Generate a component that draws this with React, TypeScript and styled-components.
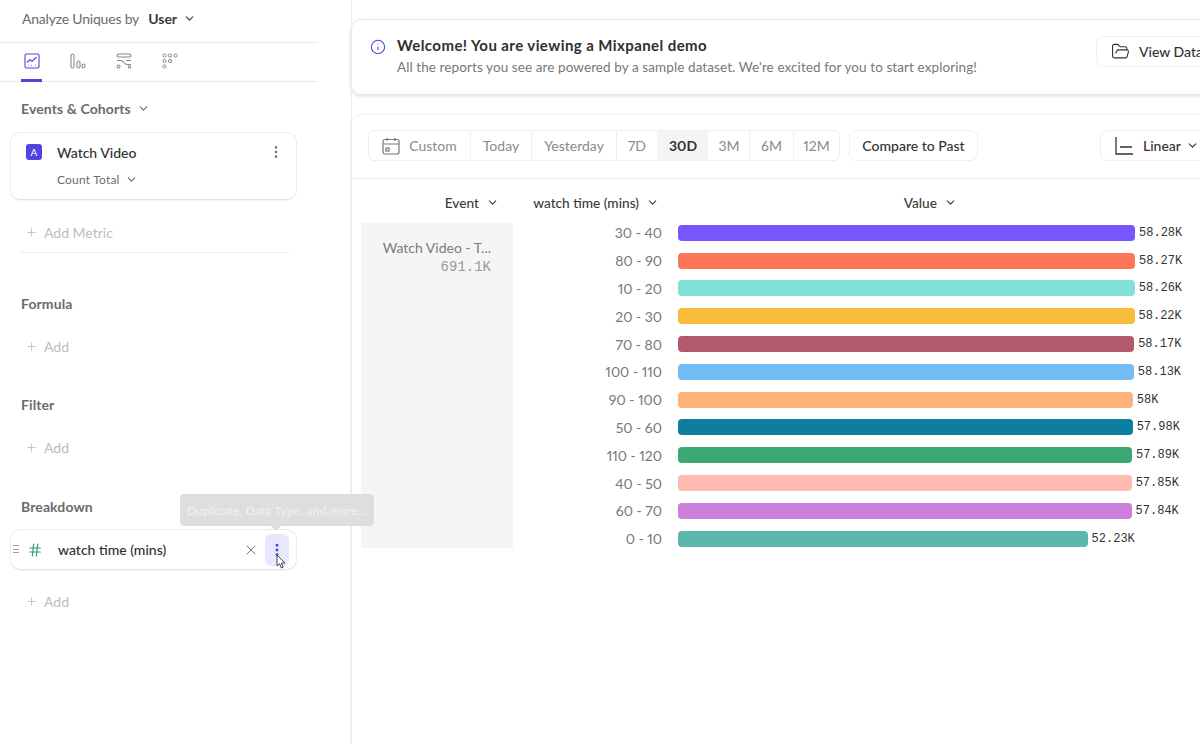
import styled, { createGlobalStyle } from 'styled-components';
import { ChevronDown, EllipsisVertical, FolderOpen, Hash, Info, Plus, X } from 'lucide-react';

const rows = [
  { label: '30 - 40', value: 58.28, text: '58.28K', color: '#7856ff' },
  { label: '80 - 90', value: 58.27, text: '58.27K', color: '#ff7557' },
  { label: '10 - 20', value: 58.26, text: '58.26K', color: '#80e1d9' },
  { label: '20 - 30', value: 58.22, text: '58.22K', color: '#f8bc3b' },
  { label: '70 - 80', value: 58.17, text: '58.17K', color: '#b2596e' },
  { label: '100 - 110', value: 58.13, text: '58.13K', color: '#72bef4' },
  { label: '90 - 100', value: 58, text: '58K', color: '#ffb27a' },
  { label: '50 - 60', value: 57.98, text: '57.98K', color: '#0d7ea0' },
  { label: '110 - 120', value: 57.89, text: '57.89K', color: '#3ba974' },
  { label: '40 - 50', value: 57.85, text: '57.85K', color: '#febbb2' },
  { label: '60 - 70', value: 57.84, text: '57.84K', color: '#cb80dc' },
  { label: '0 - 10', value: 52.23, text: '52.23K', color: '#5cb7af' },
];

const ranges = [
  { label: 'Today', width: 61 },
  { label: 'Yesterday', width: 85 },
  { label: '7D', width: 41 },
  { label: '30D', width: 51, active: true },
  { label: '3M', width: 41, plain: true },
  { label: '6M', width: 44 },
  { label: '12M', width: 46 },
];

const GlobalStyle = createGlobalStyle`
  html, body {
    margin: 0;
    padding: 0;
    background: #fff;
    overflow: hidden;
  }
  * {
    box-sizing: border-box;
  }
`;

const Page = styled.div`
  display: flex;
  width: 1200px;
  height: 744px;
  overflow: hidden;
  font-family: Lato, 'Noto Sans', sans-serif;
  font-variant-numeric: proportional-nums;
  color: #3b3b3b;
`;

const Sidebar = styled.aside`
  position: relative;
  flex: 0 0 352px;
  height: 100%;
  border-right: 1px solid #ececec;
`;

const TopRow = styled.div`
  display: flex;
  align-items: center;
  width: 318px;
  height: 43px;
  padding: 0 0 5px 22px;
  border-bottom: 1px solid #e9e9e9;
  font-size: 14px;
  color: #6b6b6b;
  letter-spacing: -0.2px;
`;

const TopValue = styled.span`
  display: flex;
  align-items: center;
  gap: 6px;
  margin-left: 9px;
  font-weight: 700;
  color: #3b3b3b;
  letter-spacing: 0;
`;

const Tabs = styled.div`
  display: flex;
  width: 318px;
  height: 39px;
  padding-left: 21px;
  gap: 25px;
  border-bottom: 1px solid #e9e9e9;
`;

const Tab = styled.div<{ $active?: boolean }>`
  display: flex;
  justify-content: center;
  width: 21px;
  height: 39px;
  padding-top: 10px;
  border-bottom: 3px solid ${(p) => (p.$active ? '#4f44e0' : 'transparent')};
  color: ${(p) => (p.$active ? '#4f44e0' : '#8a8a8a')};
`;

const Section = styled.section<{ $top: number }>`
  margin-top: ${(p) => p.$top}px;
`;

const SectionTitle = styled.h3`
  display: flex;
  align-items: center;
  gap: 6px;
  height: 20px;
  margin: 0 0 0 21px;
  font-size: 14px;
  font-weight: 700;
  color: #6b6b6b;
  letter-spacing: 0.1px;
`;

const Card = styled.div`
  display: flex;
  flex-direction: column;
  width: 287px;
  margin: 13px 0 0 10px;
  border: 1px solid #ececec;
  border-bottom-color: #e2e2e2;
  border-radius: 10px;
  box-shadow: 0 1px 1px rgba(0, 0, 0, 0.04);
`;

const MetricCard = styled(Card)`
  height: 68px;
  margin-top: 14px;
  padding: 10px 12px 0 15px;
`;

const BreakdownCard = styled(Card)`
  position: relative;
  flex-direction: row;
  align-items: center;
  height: 41px;
  margin-top: 13px;
  padding-left: 16px;
`;

const CardRow = styled.div`
  display: flex;
  align-items: center;
  height: 18px;
`;

const LetterBadge = styled.span`
  display: flex;
  align-items: center;
  justify-content: center;
  width: 16px;
  height: 16px;
  border-radius: 3px;
  background: #4f44e0;
  color: #fff;
  font-size: 10px;
`;

const CardName = styled.span`
  flex: 1;
  margin-left: 15px;
  font-size: 14px;
  font-weight: 500;
  color: #2f2f2f;
`;

const SubSelect = styled.div`
  display: flex;
  align-items: center;
  gap: 5px;
  margin: 11px 0 0 31px;
  font-size: 12px;
  color: #6b6b6b;
  letter-spacing: 0.2px;
`;

const AddRow = styled.div<{ $top: number }>`
  display: flex;
  align-items: center;
  gap: 6px;
  height: 20px;
  margin: ${(p) => p.$top}px 0 0 25px;
  font-size: 14px;
  color: #bdbdbd;
`;

const SoftRule = styled.div`
  width: 270px;
  height: 1px;
  margin: 10px 0 0 20px;
  background: #f0f0f0;
`;

const Grip = styled.span`
  position: absolute;
  left: 2px;
  top: 15px;
  width: 6px;
  height: 8px;
  border-top: 1px solid #9b9b9b;
  border-bottom: 1px solid #9b9b9b;
  &::after {
    content: '';
    display: block;
    margin-top: 2.5px;
    height: 1px;
    background: #9b9b9b;
  }
`;

const DotsButton = styled.span`
  display: flex;
  align-items: center;
  justify-content: center;
  width: 24px;
  height: 32px;
  margin: 0 7px 0 6px;
  border-radius: 6px;
  background: #e9e7fb;
  color: #4f44e0;
`;

const Tooltip = styled.div`
  position: absolute;
  left: 180px;
  top: 494px;
  width: 194px;
  height: 32px;
  display: flex;
  align-items: center;
  justify-content: center;
  border-radius: 4px;
  background: #dedede;
  color: #f1f1f1;
  font-size: 12px;
  letter-spacing: 0.2px;
  white-space: nowrap;
  &::after {
    content: '';
    position: absolute;
    left: 91px;
    top: 32px;
    border: 5px solid transparent;
    border-top-color: #dedede;
  }
`;

const Pointer = styled.svg`
  position: absolute;
  left: 276px;
  top: 554px;
`;

const Main = styled.main`
  flex: 0 0 900px;
  margin-left: -2px;
  padding-top: 19px;
`;

const Banner = styled.div`
  display: flex;
  align-items: flex-start;
  height: 76px;
  padding: 16px 0 0 19px;
  border: 1px solid #e6e6e6;
  border-radius: 12px;
  box-shadow: 0 2px 3px rgba(0, 0, 0, 0.1);
  color: #4f44e0;
`;

const BannerText = styled.div`
  flex: 1;
  margin-left: 11px;
`;

const BannerTitle = styled.div`
  font-size: 15px;
  line-height: 19px;
  font-weight: 700;
  color: #2f2f2f;
  letter-spacing: 0.42px;
`;

const BannerBody = styled.div`
  margin-top: 4px;
  font-size: 13.5px;
  line-height: 17px;
  color: #777;
  letter-spacing: 0.09px;
`;

const OutlineButton = styled.div`
  display: flex;
  align-items: center;
  gap: 9px;
  height: 31px;
  border: 1px solid #efefef;
  border-radius: 8px;
  font-size: 14px;
  font-weight: 500;
  color: #333;
  white-space: nowrap;
`;

const ViewData = styled(OutlineButton)`
  width: 150px;
  margin-right: 3px;
  padding-left: 14px;
`;

const ReportCard = styled.div`
  height: 640px;
  margin-top: 19px;
  border-top: 1px solid #f0f0f0;
  border-left: 1px solid #f0f0f0;
  border-top-left-radius: 12px;
`;

const Toolbar = styled.div`
  display: flex;
  align-items: center;
  height: 64px;
  padding: 0 0 2px 17px;
  border-bottom: 1px solid #ececec;
`;

const Segments = styled.div`
  display: flex;
  height: 31px;
  border: 1px solid #efefef;
  border-radius: 6px;
`;

const Segment = styled.div<{ $active?: boolean; $plain?: boolean }>`
  display: flex;
  align-items: center;
  justify-content: center;
  gap: 9px;
  border-left: 1px solid ${(p) => (p.$active || p.$plain ? 'transparent' : '#efefef')};
  background: ${(p) => (p.$active ? '#f4f4f4' : 'transparent')};
  font-size: 14px;
  font-weight: ${(p) => (p.$active ? 700 : 400)};
  color: ${(p) => (p.$active ? '#333' : '#8a8a8a')};
  &:first-child {
    border-left: 0;
  }
`;

const Compare = styled(OutlineButton)`
  justify-content: center;
  width: 129px;
  margin-left: 9px;
`;

const LinearButton = styled(OutlineButton)`
  gap: 10px;
  width: 110px;
  margin-left: 122px;
  padding-left: 14px;
`;

const Columns = styled.div`
  display: flex;
  height: 40px;
  padding-top: 13px;
  font-size: 13.7px;
  font-weight: 500;
  color: #3b3b3b;
`;

const ColumnHead = styled.div<{ $width: number }>`
  display: flex;
  align-items: center;
  justify-content: flex-end;
  gap: 7px;
  width: ${(p) => p.$width}px;
  height: 20px;
`;

const ChartBody = styled.div`
  display: flex;
  align-items: flex-start;
  padding-left: 10px;
`;

const EventCell = styled.div`
  flex: 0 0 152px;
  height: 325px;
  margin-top: 4px;
  padding: 15px 22px 0 0;
  background: #f5f5f5;
  text-align: right;
  font-size: 14px;
  line-height: 19px;
  color: #7b7b7b;
`;

const Mono = styled.span`
  font-family: 'Liberation Mono', monospace;
  font-size: 12px;
  color: #333;
`;

const EventTotal = styled(Mono)`
  display: block;
  margin-top: 1px;
  color: #9a9a9a;
  font-size: 14px;
`;

const BarList = styled.div`
  flex: 1;
`;

const BarRow = styled.div`
  display: flex;
  align-items: center;
  height: 27.8px;
`;

const RangeLabel = styled.span`
  flex: 0 0 149px;
  text-align: right;
  font-size: 14px;
  color: #777;
`;

const Bar = styled.span`
  height: 16px;
  margin: 0 4px 0 16px;
  border-radius: 4px;
`;

const TabLine = () => (
  <svg width="16" height="16" viewBox="0 0 16 16" fill="none" stroke="currentColor" strokeWidth="1.1">
    <rect x="1" y="1" width="14" height="14" rx="1.5" />
    <path d="M3 9.5l3-3 2 2 4.5-4.5" />
    <path d="M4 12.5h.5M7.5 12.5H8M11 12.5h.5" strokeWidth="1.4" />
  </svg>
);

const TabBars = () => (
  <svg width="16" height="16" viewBox="0 0 16 16" fill="none" stroke="currentColor" strokeWidth="1.1">
    <rect x="1" y="1" width="3" height="14" rx="1.5" />
    <rect x="7" y="8" width="3" height="7" rx="1.5" />
    <rect x="12" y="11" width="3" height="4" rx="1.5" />
  </svg>
);

const TabFlow = () => (
  <svg width="16" height="16" viewBox="0 0 16 16" fill="none" stroke="currentColor" strokeWidth="1.1">
    <rect x="1" y="1" width="14" height="3" rx="1.5" />
    <path d="M1 7.5h4c3 0 3 4 6 4h4M10 7.5h5" />
    <circle cx="2.5" cy="13.5" r="1.5" />
    <circle cx="13.5" cy="14" r="1.2" />
  </svg>
);

const TabDots = () => (
  <svg width="16" height="16" viewBox="0 0 16 16" fill="none" stroke="currentColor" strokeWidth="1">
    <circle cx="2.5" cy="2.5" r="1.6" />
    <circle cx="8" cy="2.5" r="1.6" />
    <circle cx="13.5" cy="2.5" r="1.6" />
    <circle cx="2.5" cy="8" r="1.6" />
    <circle cx="8" cy="8" r="1.6" />
    <circle cx="2.5" cy="13.5" r="1.6" />
  </svg>
);

const CalendarIcon = () => (
  <svg width="18" height="18" viewBox="0 0 18 18" fill="none" stroke="#777" strokeWidth="1.2">
    <rect x="1" y="2.5" width="16" height="14.5" rx="2" />
    <path d="M1 7h16M5 1v3M13 1v3" />
    <rect x="4" y="11" width="3" height="3" />
  </svg>
);

const AxisIcon = () => (
  <svg width="18" height="18" viewBox="0 0 18 18" fill="none" stroke="#333" strokeWidth="1.3">
    <path d="M1 0v17h17M5 10h12" />
  </svg>
);

const App = () => {
  return (
    <>
      <GlobalStyle />
      <Page>
        <Sidebar>
          <TopRow>
            Analyze Uniques by
            <TopValue>
              User <ChevronDown size={13} strokeWidth={2} />
            </TopValue>
          </TopRow>
          <Tabs>
            <Tab $active><TabLine /></Tab>
            <Tab><TabBars /></Tab>
            <Tab><TabFlow /></Tab>
            <Tab><TabDots /></Tab>
          </Tabs>

          <Section $top={16}>
            <SectionTitle>
              Events &amp; Cohorts <ChevronDown size={13} strokeWidth={2} />
            </SectionTitle>
            <MetricCard>
              <CardRow>
                <LetterBadge>A</LetterBadge>
                <CardName>Watch Video</CardName>
                <EllipsisVertical size={16} color="#777" />
              </CardRow>
              <SubSelect>
                Count Total <ChevronDown size={13} strokeWidth={2} />
              </SubSelect>
            </MetricCard>
            <AddRow $top={22}>
              <Plus size={13} strokeWidth={1.5} /> Add Metric
            </AddRow>
            <SoftRule />
          </Section>

          <Section $top={40}>
            <SectionTitle>Formula</SectionTitle>
            <AddRow $top={23}>
              <Plus size={13} strokeWidth={1.5} /> Add
            </AddRow>
          </Section>

          <Section $top={38}>
            <SectionTitle>Filter</SectionTitle>
            <AddRow $top={23}>
              <Plus size={13} strokeWidth={1.5} /> Add
            </AddRow>
          </Section>

          <Section $top={39}>
            <SectionTitle>Breakdown</SectionTitle>
            <BreakdownCard>
              <Grip />
              <Hash size={16} color="#2f9e6e" strokeWidth={1.8} />
              <CardName>watch time (mins)</CardName>
              <X size={16} color="#777" strokeWidth={1.5} />
              <DotsButton>
                <EllipsisVertical size={16} strokeWidth={2.4} />
              </DotsButton>
            </BreakdownCard>
            <AddRow $top={21}>
              <Plus size={13} strokeWidth={1.5} /> Add
            </AddRow>
          </Section>

          <Tooltip>Duplicate, Data Type, and more...</Tooltip>
          <Pointer width="10" height="16" viewBox="0 0 10 16">
            <path d="M1 1v11l2.6-2.4L5.4 14l1.8-.8-1.8-4.2H9z" fill="#fff" stroke="#333" strokeWidth="0.9" />
          </Pointer>
        </Sidebar>

        <Main>
          <Banner>
            <Info size={16} strokeWidth={1.6} style={{ marginTop: 3 }} />
            <BannerText>
              <BannerTitle>Welcome! You are viewing a Mixpanel demo</BannerTitle>
              <BannerBody>
                All the reports you see are powered by a sample dataset. We're excited for you to start exploring!
              </BannerBody>
            </BannerText>
            <ViewData>
              <FolderOpen size={19} strokeWidth={1.4} /> View Data
            </ViewData>
          </Banner>

          <ReportCard>
            <Toolbar>
              <Segments>
                <Segment style={{ width: 101 }}>
                  <CalendarIcon /> Custom
                </Segment>
                {ranges.map((r) => (
                  <Segment key={r.label} $active={r.active} $plain={r.plain} style={{ width: r.width }}>
                    {r.label}
                  </Segment>
                ))}
              </Segments>
              <Compare>Compare to Past</Compare>
              <LinearButton>
                <AxisIcon /> Linear <ChevronDown size={13} strokeWidth={2} style={{ marginLeft: -5 }} />
              </LinearButton>
            </Toolbar>

            <Columns>
              <ColumnHead $width={148}>
                Event <ChevronDown size={13} strokeWidth={2} />
              </ColumnHead>
              <ColumnHead $width={160}>
                watch time (mins) <ChevronDown size={13} strokeWidth={2} />
              </ColumnHead>
              <ColumnHead $width={298}>
                Value <ChevronDown size={13} strokeWidth={2} />
              </ColumnHead>
            </Columns>

            <ChartBody>
              <EventCell>
                Watch Video - T...
                <EventTotal>691.1K</EventTotal>
              </EventCell>
              <BarList>
                {rows.map((r) => (
                  <BarRow key={r.label}>
                    <RangeLabel>{r.label}</RangeLabel>
                    <Bar style={{ width: r.value * 7.842, background: r.color }} />
                    <Mono>{r.text}</Mono>
                  </BarRow>
                ))}
              </BarList>
            </ChartBody>
          </ReportCard>
        </Main>
      </Page>
    </>
  );
};

export default App;
